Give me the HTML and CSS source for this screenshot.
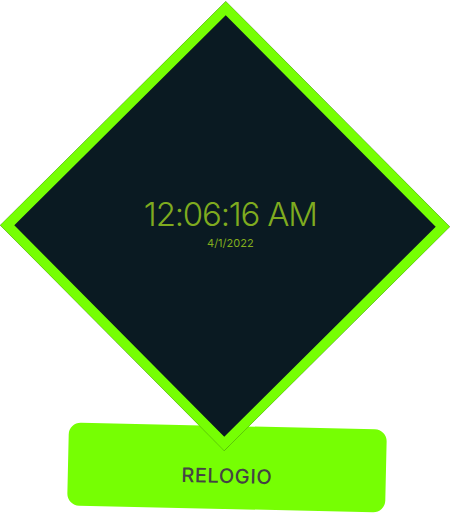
FILE: index.html
```html
<!DOCTYPE html>
<html>
<head>
<meta charset="utf-8">
<link rel="stylesheet" href="styles.css">
</head>
<body>
<div class="page">
  <div class="diamond">
    <div class="face">
      <div class="time">12:06:16 AM</div>
      <div class="date">4/1/2022</div>
    </div>
  </div>
  <div class="label">RELOGIO</div>
</div>
</body>
</html>
```
FILE: styles.css
```css
html, body {
  margin: 0;
  padding: 0;
  background: #ffffff;
}
.page {
  width: 452px;
  height: 513px;
  display: flex;
  flex-direction: column;
  align-items: center;
  overflow: hidden;
}
.diamond {
  position: relative;
  z-index: 1;
  box-sizing: border-box;
  width: 318px;
  height: 318px;
  margin-top: 67px;
  margin-right: 2px;
  background: #0a1a22;
  border: 10px solid #76ff03;
  transform: rotate(45.2deg);
  display: flex;
  align-items: center;
  justify-content: center;
}
.face {
  transform: rotate(-45.2deg);
  display: flex;
  flex-direction: column;
  align-items: center;
  padding-bottom: 6px;
  padding-left: 10px;
  font-family: Inter, "DejaVu Sans", sans-serif;
  color: #7fab1f;
}
.time {
  font-size: 33px;
  font-weight: 350;
  letter-spacing: -1.2px;
  line-height: 34px;
  white-space: nowrap;
}
.date {
  font-size: 11px;
  line-height: 12px;
  margin-top: 6px;
  color: #82ad1d;
}
.label {
  box-sizing: border-box;
  width: 318px;
  height: 83px;
  margin-top: 41px;
  margin-left: 2px;
  background: #76ff03;
  border-radius: 12px;
  transform: rotate(1.3deg);
  display: flex;
  align-items: center;
  justify-content: center;
  font-family: Inter, "DejaVu Sans", sans-serif;
  font-size: 20px;
  font-weight: 500;
  letter-spacing: 0.6px;
  color: #444444;
  padding-top: 17px;
}
```
